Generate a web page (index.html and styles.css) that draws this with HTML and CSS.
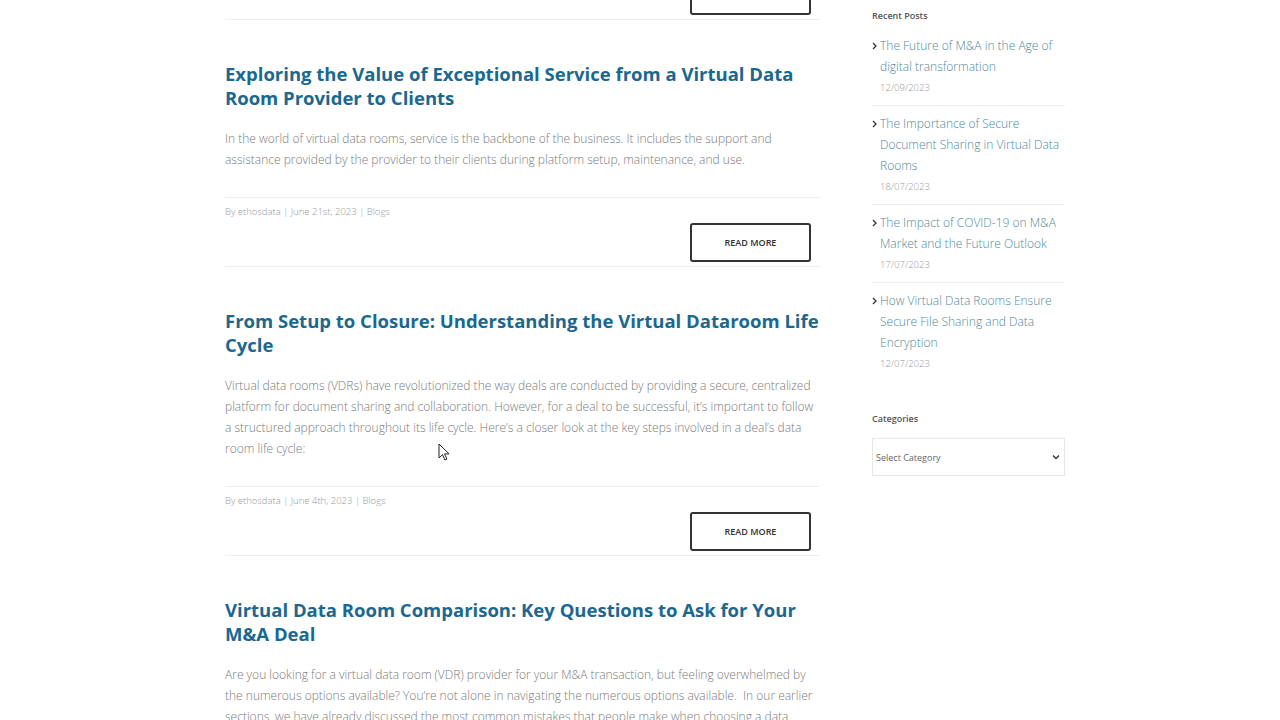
FILE: index.html
```html
<!DOCTYPE html>
<html lang="en">
  <head>
    <meta charset="UTF-8" />
    <meta name="viewport" content="width=device-width, initial-scale=1.0" />
    <title>Blog</title>
    <link rel="stylesheet" href="styles.css">
  </head>
  <body>
    <div class="page">
      <main class="posts">
        <!-- end of the previous post -->
        <div class="post-footer post-footer--tail">
          <div class="post-actions">
            <a class="read-more" href="#">READ MORE</a>
          </div>
        </div>

        <article class="post">
          <h2 class="post-title">
            <a href="#">Exploring the Value of Exceptional Service from a Virtual Data Room Provider to Clients</a>
          </h2>
          <p class="post-excerpt">
            In the world of virtual data rooms, service is the backbone of the business. It includes the support and assistance provided by the provider to their clients during platform setup, maintenance, and use.
          </p>
          <div class="post-footer">
            <p class="post-meta">By <a href="#">ethosdata</a> | June 21st, 2023 | <a href="#">Blogs</a></p>
            <div class="post-actions">
              <a class="read-more" href="#">READ MORE</a>
            </div>
          </div>
        </article>

        <article class="post">
          <h2 class="post-title">
            <a href="#">From Setup to Closure: Understanding the Virtual Dataroom Life Cycle</a>
          </h2>
          <p class="post-excerpt">
            Virtual data rooms (VDRs) have revolutionized the way deals are conducted by providing a secure, centralized platform for document sharing and collaboration. However, for a deal to be successful, it’s important to follow a structured approach throughout its life cycle. Here’s a closer look at the key steps involved in a deal’s data room life cycle:
          </p>
          <div class="post-footer">
            <p class="post-meta">By <a href="#">ethosdata</a> | June 4th, 2023 | <a href="#">Blogs</a></p>
            <div class="post-actions">
              <a class="read-more" href="#">READ MORE</a>
            </div>
          </div>
        </article>

        <article class="post">
          <h2 class="post-title">
            <a href="#">Virtual Data Room Comparison: Key Questions to Ask for Your M&amp;A Deal</a>
          </h2>
          <p class="post-excerpt">
            Are you looking for a virtual data room (VDR) provider for your M&amp;A transaction, but feeling overwhelmed by the numerous options available? You’re not alone in navigating the numerous options available.&nbsp; In our earlier sections, we have already discussed the most common mistakes that people make when choosing a data room provider.
          </p>
        </article>
      </main>

      <aside class="sidebar">
        <section class="widget">
          <h4 class="widget-title">Recent Posts</h4>
          <ul class="recent-posts">
            <li>
              <a href="#" class="recent-link">
                <svg class="chevron" width="5" height="8" viewBox="0 0 5 8"><path d="M1 1l3 3-3 3" fill="none" stroke="#333" stroke-width="1.3"/></svg>
                <span>The Future of M&amp;A in the Age of digital transformation</span>
              </a>
              <span class="recent-date">12/09/2023</span>
            </li>
            <li>
              <a href="#" class="recent-link">
                <svg class="chevron" width="5" height="8" viewBox="0 0 5 8"><path d="M1 1l3 3-3 3" fill="none" stroke="#333" stroke-width="1.3"/></svg>
                <span>The Importance of Secure Document Sharing in Virtual Data Rooms</span>
              </a>
              <span class="recent-date">18/07/2023</span>
            </li>
            <li>
              <a href="#" class="recent-link">
                <svg class="chevron" width="5" height="8" viewBox="0 0 5 8"><path d="M1 1l3 3-3 3" fill="none" stroke="#333" stroke-width="1.3"/></svg>
                <span>The Impact of COVID-19 on M&amp;A Market and the Future Outlook</span>
              </a>
              <span class="recent-date">17/07/2023</span>
            </li>
            <li>
              <a href="#" class="recent-link">
                <svg class="chevron" width="5" height="8" viewBox="0 0 5 8"><path d="M1 1l3 3-3 3" fill="none" stroke="#333" stroke-width="1.3"/></svg>
                <span>How Virtual Data Rooms Ensure Secure File Sharing and Data Encryption</span>
              </a>
              <span class="recent-date">12/07/2023</span>
            </li>
          </ul>
        </section>

        <section class="widget widget--categories">
          <h4 class="widget-title">Categories</h4>
          <div class="category-select">
            <span>Select Category</span>
            <svg width="8" height="6" viewBox="0 0 8 6"><path d="M1 1.5l3 3 3-3" fill="none" stroke="#333" stroke-width="1.4"/></svg>
          </div>
        </section>
      </aside>
    </div>

    <svg class="pointer" width="12" height="18" viewBox="0 0 12 18">
      <path d="M1 1v14l3.5-3.3 2.4 5.3 2-0.9-2.4-5.2h4.6z" fill="#fff" stroke="#222" stroke-width="1" stroke-linejoin="round"/>
    </svg>
  </body>
</html>
```

FILE: styles.css
```css
body {
  margin: 0;
  padding: 0;
  background-color: #fff;
  font-family: "Open Sans", Arial, sans-serif;
  color: #747474;
  overflow: hidden;
  position: relative;
}

a {
  text-decoration: none;
  color: inherit;
}

.page {
  display: flex;
  gap: 52px;
  margin-left: 225px;
  width: 840px;
}

/* ---- posts ---- */

.posts {
  width: 595px;
  flex-shrink: 0;
}

.post {
  padding-top: 42px;
}

.post-title {
  margin: 0;
  font-family: "Open Sans", Arial, sans-serif;
  font-weight: 700;
  font-size: 18.5px;
  line-height: 24px;
  color: #1a6891;
}

.post-excerpt {
  margin: 18px 0 0;
  font-size: 12px;
  line-height: 21px;
  font-weight: 300;
  color: #7a7a7a;
}

.post-footer {
  margin-top: 27px;
  border-top: 1px solid #eee;
  border-bottom: 1px solid #eee;
  padding: 6px 0 4px;
}

.post-footer--tail {
  margin-top: -24px;
  border-top: none;
  padding-top: 0;
}

.post-meta {
  margin: 0;
  font-size: 9.5px;
  line-height: 15px;
  font-weight: 300;
  color: #999;
}

.post-actions {
  display: flex;
  justify-content: flex-end;
  margin-top: 4px;
  padding-right: 9px;
}

.post-footer--tail .post-actions {
  margin-top: 0;
}

.read-more {
  display: flex;
  align-items: center;
  justify-content: center;
  box-sizing: border-box;
  width: 121px;
  height: 39px;
  border: 2px solid #333;
  border-radius: 3px;
  font-size: 9px;
  font-weight: 600;
  color: #333;
}

/* ---- sidebar ---- */

.sidebar {
  width: 193px;
  padding-top: 8px;
}

.widget-title {
  margin: 0 0 4px;
  font-size: 9px;
  line-height: 16px;
  font-weight: 600;
  color: #555;
}

.recent-posts {
  list-style: none;
  margin: 0;
  padding: 0;
}

.recent-posts li {
  padding: 7px 0;
  border-bottom: 1px solid #eee;
}

.recent-posts li:last-child {
  border-bottom: none;
}

.recent-link {
  display: flex;
  gap: 3px;
  font-size: 12px;
  line-height: 21px;
  font-weight: 300;
  color: #4f8a9b;
}

.chevron {
  flex-shrink: 0;
  margin-top: 7px;
}

.recent-date {
  display: block;
  margin-top: 1px;
  padding-left: 8px;
  font-size: 9.5px;
  line-height: 20px;
  font-weight: 300;
  color: #999;
}

.widget--categories {
  margin-top: 30px;
}

.widget--categories .widget-title {
  margin-bottom: 11px;
}

.category-select {
  display: flex;
  align-items: center;
  justify-content: space-between;
  box-sizing: border-box;
  height: 38px;
  padding: 0 4px 0 3px;
  border: 1px solid #e6e6e6;
  font-size: 9px;
  color: #666;
}

.pointer {
  position: absolute;
  top: 443px;
  left: 438px;
}
```
